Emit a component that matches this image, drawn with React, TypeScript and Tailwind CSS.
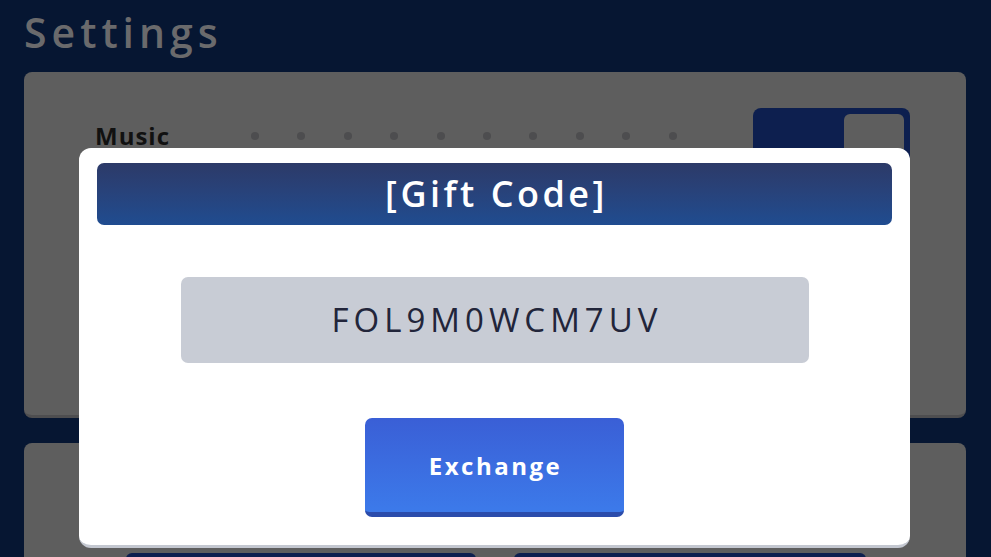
export default function App() {
  const dots = Array.from({ length: 10 });

  return (
    <div className="relative w-[991px] h-[557px] overflow-hidden bg-[#061632] font-['Open_Sans',sans-serif]">
      {/* Page behind the dialog */}
      <div className="flex flex-col pl-6 pr-[25px]">
        <h1 className="h-[72px] pt-[6px] text-[41px] leading-[52px] font-semibold text-[#6a6a6c] tracking-[5px]">
          Settings
        </h1>

        <div className="h-[346px] rounded-[8px] bg-[#5e5e5e] border-b-[3px] border-[#4e4e50]">
          <div className="flex items-start pl-[71px] pr-[56px] pt-[36px]">
            <div className="flex items-center h-[56px]">
              <span className="w-[156px] text-[24px] font-bold text-[#111] tracking-[1px]">Music</span>
              <div className="flex gap-[38.4px]">
                {dots.map((_, i) => (
                  <span key={i} className="w-[8px] h-[8px] rounded-full bg-[#4d4d4f]" />
                ))}
              </div>
            </div>
            <div className="ml-auto w-[157px] h-[90px] rounded-[8px] bg-[#0d1f4f] flex justify-end pt-[6px] pr-[6px]">
              <div className="w-[60px] h-[70px] rounded-[6px] bg-[#5e5e5e]" />
            </div>
          </div>
        </div>

        <div className="mt-[25px] h-[140px] rounded-[8px] bg-[#5e5e5e] flex gap-[38px] pl-[102px] pt-[110px]">
          <div className="w-[350px] h-[40px] rounded-[6px] bg-[#0d1f4f]" />
          <div className="w-[352px] h-[40px] rounded-[6px] bg-[#0d1f4f]" />
        </div>
      </div>

      {/* Gift code dialog */}
      <div className="absolute left-[79px] top-[148px] w-[831px] h-[400px] rounded-[12px] bg-white border-b-[3px] border-[#c3c7d0] flex flex-col items-center pt-[15px]">
        <div className="w-[795px] h-[62px] rounded-[7px] bg-gradient-to-b from-[#2c3a68] to-[#1f4c90] flex items-center justify-center">
          <span className="text-[36px] font-semibold text-white tracking-[3.5px] pl-[4px]">[Gift Code]</span>
        </div>

        <div className="mt-[52px] w-[628px] h-[86px] rounded-[7px] bg-[#c8ccd5] flex items-center justify-center">
          <span className="text-[33px] text-[#22253a] tracking-[5px] pl-[5px]">FOL9M0WCM7UV</span>
        </div>

        <button className="mt-[55px] w-[259px] h-[99px] rounded-[7px] bg-gradient-to-b from-[#3a5fd6] to-[#3c7aea] border-b-[5px] border-[#2b4cab] flex items-center justify-center pt-[2px]">
          <span className="text-[24px] font-bold text-white tracking-[2.5px] pl-[2px]">Exchange</span>
        </button>
      </div>
    </div>
  );
}
